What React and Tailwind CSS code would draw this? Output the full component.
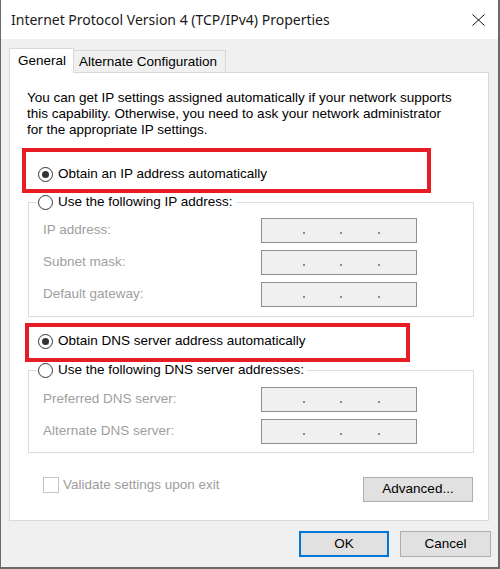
import React from "react";

function Radio({ checked }) {
  return (
    <span className="w-[15px] h-[15px] rounded-full border border-[#333333] bg-white flex items-center justify-center shrink-0">
      {checked && <span className="w-[7px] h-[7px] rounded-full bg-[#333333]" />}
    </span>
  );
}

function IpBox() {
  // dotted IPv4 entry box, disabled
  return (
    <div className="w-[156px] h-[25px] border border-[#8f8f8f] bg-[#f0f0f0] flex items-center pt-[5px]">
      <span className="ml-[41px] w-[2px] h-[2px] bg-[#8a8a8a]" />
      <span className="ml-[35px] w-[2px] h-[2px] bg-[#8a8a8a]" />
      <span className="ml-[36px] w-[2px] h-[2px] bg-[#8a8a8a]" />
    </div>
  );
}

function FieldRow({ label }) {
  return (
    <div className="flex items-center h-[25px] ml-[5px]">
      <span className="w-[218px] text-[#a0a0a0]">{label}</span>
      <IpBox />
    </div>
  );
}

function GroupBox({ legend, rows, pt, pb }) {
  return (
    <fieldset className={`ml-[18px] w-[446px] border border-[#dcdcdc] pl-[9px] ${pt} ${pb}`}>
      <legend className="pr-[3px]">
        <div className="flex items-center gap-[5px] h-[16px]">
          <Radio />
          <span className="text-black">{legend}</span>
        </div>
      </legend>
      <div className="flex flex-col gap-[7px]">
        {rows.map((r) => (
          <FieldRow key={r} label={r} />
        ))}
      </div>
    </fieldset>
  );
}

export default function App() {
  return (
    <div className="w-[500px] h-[569px] flex flex-col border-l border-r-2 border-b-2 border-[#6a6a6a] bg-[#f0f0f0] font-['Liberation_Sans',Arial,sans-serif] text-[13.5px] text-black overflow-hidden">
      {/* Title bar */}
      <div className="h-[39px] bg-white flex items-center justify-between pl-[10px] pr-[13px] shrink-0">
        <span className="font-['Noto_Sans',sans-serif] text-[14px] text-[#1a1a1a]">
          Internet Protocol Version 4 (TCP/IPv4) Properties
        </span>
        <svg width="13" height="12" viewBox="0 0 13 12" className="mt-[1px]">
          <path d="M0.5 0.5 L12.5 11.5 M12.5 0.5 L0.5 11.5" stroke="#111" strokeWidth="1" fill="none" />
        </svg>
      </div>

      {/* Body */}
      <div className="flex-1 pt-[9px] pl-[8px]">
        {/* Tabs */}
        <div className="flex items-end h-[24px]">
          <div className="relative z-10 -mb-px h-[25px] w-[65px] bg-white border border-b-0 border-[#d9d9d9] flex items-center pl-[8px]">
            General
          </div>
          <div className="h-[22px] w-[152px] bg-[#f0f0f0] border border-l-0 border-b-0 border-[#d9d9d9] flex items-center pl-[5px] pt-[1px]">
            Alternate Configuration
          </div>
        </div>

        {/* Panel */}
        <div className="w-[480px] h-[449px] bg-white border border-[#d9d9d9] flex flex-col">
          <p className="mt-[17px] ml-[17px] leading-[16px] whitespace-nowrap">
            You can get IP settings assigned automatically if your network supports
            <br />
            this capability. Otherwise, you need to ask your network administrator
            <br />
            for the appropriate IP settings.
          </p>

          <div className="mt-[10px] ml-[12px] w-[409px] h-[45px] border-[4px] border-[#e81c24] pt-[15px] pl-[12px]">
            <div className="flex items-center gap-[5px] h-[15px]">
              <Radio checked />
              <span>Obtain an IP address automatically</span>
            </div>
          </div>

          <div className="mt-[1px]">
            <GroupBox
              legend="Use the following IP address:"
              rows={["IP address:", "Subnet mask:", "Default gateway:"]}
              pt="pt-[8px]"
              pb="pb-[9px]"
            />
          </div>

          <div className="mt-[6px] ml-[15px] w-[385px] h-[39px] border-[4px] border-[#e81c24] pt-[7px] pl-[9px]">
            <div className="flex items-center gap-[5px] h-[15px]">
              <Radio checked />
              <span>Obtain DNS server address automatically</span>
            </div>
          </div>

          <GroupBox
            legend="Use the following DNS server addresses:"
            rows={["Preferred DNS server:", "Alternate DNS server:"]}
            pt="pt-[9px]"
            pb="pb-[8px]"
          />

          <div className="mt-[24px] ml-[33px] w-[430px] flex justify-between items-start">
            <div className="flex items-center gap-[4px] h-[16px]">
              <span className="w-[16px] h-[16px] border border-[#c4c4c4] bg-white" />
              <span className="text-[#9d9d9d]">Validate settings upon exit</span>
            </div>
            <button className="w-[110px] h-[25px] bg-[#e1e1e1] border border-[#adadad] flex items-center justify-center">
              Advanced...
            </button>
          </div>
        </div>

        {/* Dialog buttons */}
        <div className="w-[482px] flex justify-end gap-[11px] mt-[10px]">
          <button className="w-[90px] h-[26px] bg-[#e1e1e1] border-2 border-[#0078d7] flex items-center justify-center">
            OK
          </button>
          <button className="w-[91px] h-[26px] bg-[#e1e1e1] border border-[#adadad] flex items-center justify-center">
            Cancel
          </button>
        </div>
      </div>
    </div>
  );
}
